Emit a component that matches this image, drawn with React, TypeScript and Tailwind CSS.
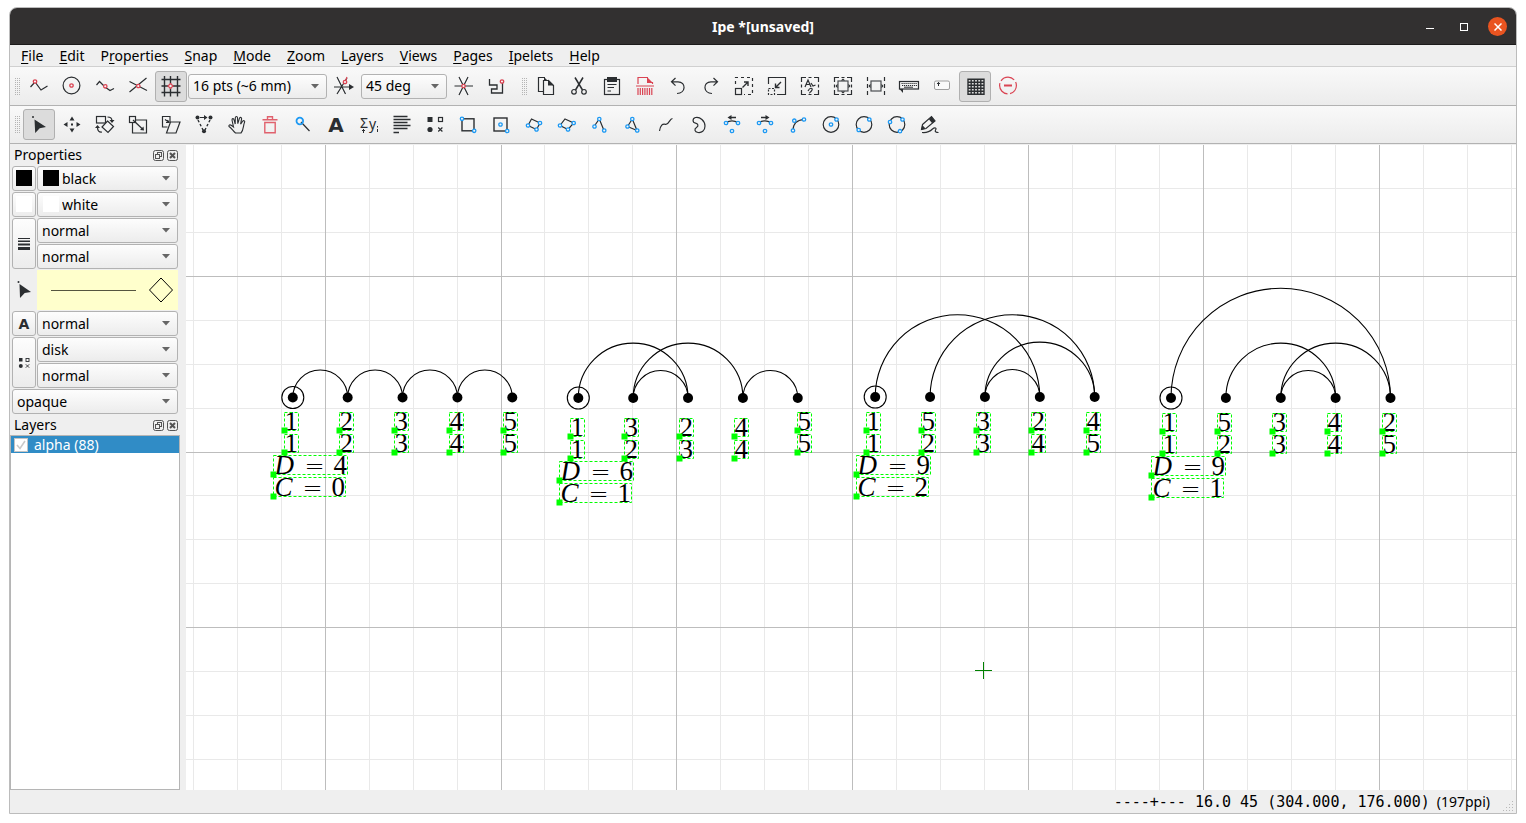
import type { ReactNode } from "react";

const INK = "#2b2e31";
const RED = "#da4453";
const BLUE = "#1d99f3";

function Glyph({ children }: { children: ReactNode }) {
  return (
    <svg width="30" height="30" viewBox="-15 -15 30 30" fill="none" stroke={INK} strokeWidth="1.2" aria-hidden="true">
      {children}
    </svg>
  );
}

function Ring({ x, y, c = BLUE, r = 1.7 }: { x: number; y: number; c?: string; r?: number }) {
  return <circle cx={x} cy={y} r={r} stroke={c} strokeWidth="1.3" fill="#f6f6f6" />;
}

type Tool = { name: string; icon: ReactNode; active?: boolean };

const snapTools: Tool[] = [
  { name: "Snap to vertex", icon: <><path d="M-8.5 1 L-4 -4 L2 4 L8.5 0" /><Ring x={-4} y={-4.5} c={RED} /></> },
  { name: "Snap to control point", icon: <><circle cx="-.5" cy="-.5" r="8.4" /><Ring x={-0.5} y={-0.5} c={RED} /></> },
  { name: "Snap to boundary", icon: <><path d="M-8.5 -1 L-5.5 -4.5 L0 1 L5 4.5 L9 2.5" /><Ring x={0.3} y={0.3} c={RED} /></> },
  { name: "Snap to intersection", icon: <><path d="M-8.5 -4.5 L9 4.5 M8.5 -8 L-8.5 6" /><Ring x={0.3} y={0} c={RED} /></> },
  {
    name: "Snap to grid",
    active: true,
    icon: <><path strokeWidth="1.4" d="M-6.5 -10 V10.5 M-.5 -10 V10.5 M6.5 -10 V10.5 M-9.5 -6.5 H9.5 M-9.5 0 H9.5 M-9.5 6.5 H9.5" /><path d="M-.5 -2.5 L2 0 L-.5 2.5 L-3 0Z" stroke={RED} fill="#eee" /></>,
  },
];

const angleTool: Tool = {
  name: "Angular snap",
  icon: <><path d="M-7 -9 L1.5 8 M3 -8 L-7 8 M-10 1 H7" /><path d="M5 -2 L10 1 L5 4Z" fill={INK} stroke="none" /><path d="M1 -4 L3 -9" stroke={RED} /><Ring x={1} y={-4} c={RED} /></>,
};

const snapTail: Tool[] = [
  { name: "Custom grid snap", icon: <><path d="M-9.5 0 H9 M-5 -9 L4 9 M4 -9 L-5 9" /><Ring x={-0.5} y={0} c={RED} /></> },
  { name: "Automatic snap", icon: <><path d="M-7.5 -7 V-1 H0 V3 H-5.5 V7 H5.5 V-3" strokeWidth="1.3" /><Ring x={5} y={-4.5} c={RED} /></> },
];

const editTools: Tool[] = [
  {
    name: "Copy",
    icon: <><path d="M-3 5.5 H-7.5 V-8.5 H-1" /><path d="M-2.5 -5.5 H2.5 L7.5 -.5 V8.5 H-2.5Z" /><path d="M2 -6.5 L8 -.5 H2Z" fill={INK} stroke="none" /><path d="M-2 -9 L1 -6 H-2Z" fill={INK} stroke="none" /></>,
  },
  { name: "Cut", icon: <><path strokeWidth="1.5" d="M-4 -8.5 L3.5 4 M4 -8.5 L-3.5 4" /><circle cx="-5" cy="5.8" r="2.3" /><circle cx="5" cy="5.8" r="2.3" /></> },
  {
    name: "Paste",
    icon: <><rect x="-7.5" y="-6.5" width="15" height="15" /><path d="M-5 -9 H5 V-4 H-5Z" fill={INK} stroke="none" /><path d="M-4.5 -1.5 H4.5 M-4.5 1.5 H2 M-4.5 5 H-1" strokeWidth="1" /></>,
  },
  {
    name: "Delete",
    icon: <g stroke={RED}><path d="M-7 -2 V-8.5 H3 M7.5 -4 V-2" /><path d="M2 -9 L8 -3 H2Z" fill={RED} stroke="none" /><path d="M-9 0 H9" /><path d="M-7 2 V9 M-4.7 2 V9 M-2.4 2 V9 M-.1 2 V9 M2.2 2 V9 M4.5 2 V9 M6.8 2 V9" /></g>,
  },
  { name: "Undo", icon: <path d="M-2.5 -8 L-6.5 -4.2 L-2.5 -.4 M-6.5 -4.2 H0 C8.5 -4.2 8 7.5 -1 7.5" /> },
  { name: "Redo", icon: <path d="M2.5 -8 L6.5 -4.2 L2.5 -.4 M6.5 -4.2 H0 C-8.5 -4.2 -8 7.5 1 7.5" /> },
  {
    name: "Zoom in",
    icon: <><path d="M-8.5 -2 V-8.5 H8.5 V8.5 H0" strokeDasharray="3 3" /><rect x="-8.5" y="2.5" width="6" height="6" /><path d="M-1.5 1.5 L4 -4 M0 -4 H4 V0" strokeWidth="1.4" /></>,
  },
  {
    name: "Zoom out",
    icon: <><path d="M-8.5 -2 V-8.5 H8.5 V8.5 H0" /><rect x="-8.5" y="2.5" width="6" height="6" strokeDasharray="2 1.5" /><path d="M4 -4 L-1.5 1.5 M-1.5 -2.5 V1.5 H2.5" strokeWidth="1.4" /></>,
  },
  {
    name: "Fit objects",
    icon: <><path d="M-8.5 -4 V-8.5 H-4 M-1.5 -8.5 H1.5 M4 -8.5 H8.5 V-4 M8.5 -1.5 V1.5 M8.5 4 V8.5 H4 M1.5 8.5 H-1.5 M-4 8.5 H-8.5 V4 M-8.5 1.5 V-1.5" /><path d="M-5 1 L-2 -6 L1 1 M-4 -1.5 H0 M1 -3 L3 0 L5.5 -1 M-2 5 C0 1 3 2 2 4 S-1 7 0 7" /></>,
  },
  {
    name: "Fit page",
    icon: <><path d="M-8.5 -4 V-8.5 H-4 M-1.5 -8.5 H1.5 M4 -8.5 H8.5 V-4 M8.5 -1.5 V1.5 M8.5 4 V8.5 H4 M1.5 8.5 H-1.5 M-4 8.5 H-8.5 V4 M-8.5 1.5 V-1.5" /><rect x="-5" y="-5" width="10" height="10" stroke="#4a4d50" /><path d="M-2.2 -5.5 H2.2 L0 -7.5Z M-2.2 5.5 H2.2 L0 7.5Z M-5.5 -2.2 V2.2 L-7.5 0Z M5.5 -2.2 V2.2 L7.5 0Z" fill={INK} stroke="none" /></>,
  },
  {
    name: "Fit width",
    icon: <><path d="M-8.5 -9 V-5 M-8.5 -2 V2 M-8.5 5 V9 M8.5 -9 V-5 M8.5 -2 V2 M8.5 5 V9" /><rect x="-5" y="-5" width="10" height="10" stroke="#4a4d50" /><path d="M-5.5 -2.2 V2.2 L-7.5 0Z M5.5 -2.2 V2.2 L7.5 0Z" fill={INK} stroke="none" /></>,
  },
  {
    name: "Keyboard",
    icon: <><rect x="-9.5" y="-4.5" width="19" height="7.5" /><path d="M-7.5 -2.5 H8 M-7 -.5 H8" strokeDasharray="1.2 .8" strokeWidth="1.2" /><path d="M-5 1.2 H4" strokeWidth="1" /><path d="M-9.5 3 H-6 V7Z" fill={INK} stroke="none" /></>,
  },
  {
    name: "Text size",
    icon: <><rect x="-7.5" y="-5" width="15" height="8.5" rx="1.5" stroke="#a0a0a0" strokeWidth="1" fill="#fafafa" /><path d="M-3.5 0 V-3.5 M-5 -2 L-3.5 -3.6 L-2 -2" strokeWidth="1" /></>,
  },
  {
    name: "Grid visible",
    active: true,
    icon: <path strokeWidth="1.4" d="M-7 -7.5 V9 M-3.8 -7.5 V9 M-.6 -7.5 V9 M2.6 -7.5 V9 M5.8 -7.5 V9 M9 -7.5 V9 M-7.7 -6.8 H9.7 M-7.7 -3.8 H9.7 M-7.7 -.8 H9.7 M-7.7 2.2 H9.7 M-7.7 5.2 H9.7 M-7.7 8.3 H9.7" />,
  },
  {
    name: "Stop",
    icon: <g stroke={RED}><circle cx="0" cy="-.5" r="8.4" strokeDasharray="15 2.6" strokeDashoffset="4" /><path d="M-4 -.5 H4" strokeWidth="2.2" /></g>,
  },
];

const modeTools: Tool[] = [
  { name: "Select", active: true, icon: <g fill={INK} stroke="none"><circle cx="-6" cy="-8" r="1" /><path d="M-4.5 -5.5 L7 2 L.7 3.2 L-3.8 8Z" /></g> },
  {
    name: "Translate",
    icon: <g fill={INK} stroke="none"><path d="M0 -8.5 L2.5 -4.5 H-2.5Z M0 7.5 L2.5 3.5 H-2.5Z M-8.5 -.5 L-4.5 -3 V2Z M8.5 -.5 L4.5 -3 V2Z" /><path d="M-1 -1.5 H1 V.5 H-1Z" /></g>,
  },
  {
    name: "Rotate",
    icon: <><rect x="-8.5" y="-8.5" width="9" height="6.5" /><path d="M2.5 -4 L8.5 1.5 L3 7.5 L-3 2Z" fill="#f4f4f4" /><path d="M2.5 -8 C5.5 -8 7 -6.5 7 -4 M-3 7 C-6 7.5 -7.5 5.5 -7.5 2.5" /><path d="M4.5 -5 H9.5 L7 -2Z M-10 3 H-5 L-7.5 0Z" fill={INK} stroke="none" /></>,
  },
  { name: "Stretch", icon: <><rect x="-8.5" y="-8.5" width="6" height="6" /><path d="M-2 -5 H8.5 V8 H-5.5 V-2" /><path d="M-5 -5 L4.5 4" /><path d="M6 5.5 L5.5 1.5 L2 5Z" fill={INK} stroke="none" /></> },
  { name: "Shear", icon: <><path d="M-3.5 2 H-8.5 V-8.5 H-1 V-3" /><path d="M-.5 -3 H9 L5 8 H-4.5Z" /><path d="M-6 -5.5 L-2.5 -3 M-3.5 -5 L-2 -2.5 L-5 -2.5" /></> },
  {
    name: "Edit path",
    icon: <><path d="M-6 -5 L-1 5 M6 -5 L1 5" strokeDasharray="2.5 2" strokeWidth="1.4" /><path d="M-4 -7.5 H3" /><path d="M0 -10 L3.5 -7.5 L0 -5Z" fill={INK} stroke="none" /><g fill={INK} stroke="none"><circle cx="-6.5" cy="-7.5" r="2" /><circle cx="6.5" cy="-7.5" r="2" /><circle cx="0" cy="6.2" r="2" /></g></>,
  },
  {
    name: "Pan",
    icon: <path strokeWidth="1.1" d="M-1.5 8 C-4 6 -5.5 3 -8 1.5 C-8.6 0 -7 -.6 -5.8 .2 L-3.5 2 L-5 -5 C-5 -6.7 -3.3 -6.8 -3 -5.3 L-1.8 -1 L-1.7 -7.3 C-1.5 -9 .4 -9 .5 -7.3 L.8 -1.3 L2.5 -6.8 C3.2 -8.2 4.9 -7.7 4.6 -6.2 L3.6 -.8 L5.8 -4 C7 -5 8.2 -4 7.5 -2.6 C6 1 6.8 5 4 8 Z" />,
  },
  { name: "Erase", icon: <g stroke="#e0616d"><path d="M-7.5 -5.2 H7.5" strokeWidth="1.5" /><path d="M-2.5 -5.5 V-8.3 H2.5 V-5.5 M-5.2 -2.5 V7.7 H5.2 V-2.5Z" strokeWidth="1.4" /></g> },
  { name: "Magnify", icon: <><path d="M-2 -3 L6.5 6" /><circle cx="-3.2" cy="-4" r="3.3" stroke={BLUE} strokeWidth="1.8" /></> },
  { name: "Label", icon: <text textAnchor="middle" x="0" y="7" fill={INK} stroke="none" fontSize="20" fontWeight="700" fontFamily="DejaVu Sans, sans-serif">A</text> },
  {
    name: "Math label",
    icon: <g fill={INK} stroke="none" fontFamily="Noto Sans, sans-serif"><text x="-9" y="3" fontSize="14">Σ</text><text x="0" y="4" fontSize="14">y</text><path d="M8.5 1 V2.5 M8.5 4 V7 M-5.5 4 V8 M-7 5.5 H-4" stroke={INK} strokeWidth="1" /></g>,
  },
  { name: "Paragraph", icon: <path d="M-8.5 -8.5 H5.5 M-8.5 -5.5 H8.5 M-8.5 -2.5 H5.5 M-8.5 .5 H8.5 M-8.5 3.5 H5.5 M-8.5 7.5 H-3" strokeWidth="1.3" /> },
  {
    name: "Marks",
    icon: <><path d="M-7.5 -8 H-2.5 V-3 H-7.5Z" fill={INK} stroke="none" /><rect x="3.5" y="-7.5" width="4" height="4" /><circle cx="-5" cy="4.5" r="2.6" fill={INK} stroke="none" /><path d="M3.2 2.5 L7.4 6.5 M7.4 2.5 L3.2 6.5" /></>,
  },
  { name: "Rectangle", icon: <><rect x="-6" y="-6.2" width="12" height="12" strokeWidth="1.4" /><Ring x={-6} y={-6.2} /><Ring x={6.2} y={5.8} /></> },
  { name: "Centered rectangle", icon: <><rect x="-7" y="-7" width="13" height="13" strokeWidth="1.4" /><Ring x={-0.5} y={-0.5} /><Ring x={6.2} y={6} /></> },
  { name: "Rotated rectangle", icon: <><path d="M-2.5 -6 L6 -2 L2.5 4.5 L-6 .5Z" /><Ring x={-6} y={0.5} /><Ring x={6} y={-2} /><Ring x={2.5} y={4.5} /></> },
  { name: "Parallelogram", icon: <><path d="M-2 -6 L6.7 -2 L1 4.5 L-7 .5Z" /><Ring x={-7} y={0.5} /><Ring x={6.7} y={-2} /><Ring x={1} y={4.5} /></> },
  { name: "Polyline", icon: <><path d="M-6 1.5 L-.7 -6 L4 5.5" /><Ring x={-5.5} y={1.5} /><Ring x={-0.7} y={-6} /><Ring x={4.2} y={5.5} /></> },
  { name: "Polygon", icon: <><path d="M-5.5 1.5 L-.7 -6 L4 5.5Z" /><Ring x={-5.5} y={1.5} /><Ring x={-0.7} y={-6} /><Ring x={4.2} y={5.5} /></> },
  { name: "Spline", icon: <path d="M-6.5 6 C-5.5 0 -3.5 -1.5 -.5 -.7 C3 0 3.5 -6.5 6.5 -6.5" /> },
  { name: "Closed spline", icon: <path d="M-3.5 -7.5 C1 -8.5 6 -4 6 1 C6 6 2.5 8 -1 7.5 C-4.5 7 -5 4 -2.5 2.5 C0 1 -1 -1.5 -3.5 -1.8 C-6.5 -2.2 -7 -6.5 -3.5 -7.5Z" /> },
  {
    name: "Arc left",
    icon: <><path d="M-6 -2.5 C-2.5 -4.5 2.5 -4.5 6 -2.5" /><path d="M-1 -7.5 H4" strokeWidth="1.4" /><path d="M-4.5 -7.5 L-.5 -10 V-5Z" fill={INK} stroke="none" /><Ring x={-6} y={-2} /><Ring x={6} y={-2} /><Ring x={0} y={6} /></>,
  },
  {
    name: "Arc right",
    icon: <><path d="M-6 -2.5 C-2.5 -4.5 2.5 -4.5 6 -2.5" /><path d="M1 -7.5 H-4" strokeWidth="1.4" /><path d="M4.5 -7.5 L.5 -10 V-5Z" fill={INK} stroke="none" /><Ring x={-6} y={-2} /><Ring x={6} y={-2} /><Ring x={0} y={6} /></>,
  },
  { name: "Arc through points", icon: <><path d="M-5 5.5 C-5 -2 -1 -5 6 -5.5" /><Ring x={-5} y={5.5} /><Ring x={-3.7} y={-4.3} /><Ring x={6} y={-5.5} /></> },
  { name: "Circle", icon: <><circle cx="0" cy="-.5" r="7.8" /><Ring x={0} y={-0.5} /><Ring x={5.5} y={-5.5} /></> },
  { name: "Circle by diameter", icon: <><circle cx="0" cy="-.5" r="7.8" /><Ring x={-5.3} y={5} /><Ring x={5.3} y={-5.5} /></> },
  { name: "Circle by points", icon: <><circle cx="0" cy="-.5" r="7.8" /><Ring x={-7} y={-3} /><Ring x={5.5} y={-5.5} /><Ring x={3} y={6.2} /></> },
  {
    name: "Ink",
    icon: <><path d="M-7.5 -.5 L1.5 -8.5 L5 -4 L-4 3.5 L-8.5 4.5Z" /><path d="M-1 -5.5 L2.2 -1.8 L5 -4 L1.5 -8.5Z M-8.8 5 L-7.8 0 L-4.5 3.5Z" fill={INK} stroke="none" /><path d="M-8 7.5 C-3 8 0 6.5 2.5 4 C5 2 7 3 5.5 5 C4.5 7 6.5 7.5 8.5 7.5" /></>,
  },
];

function ToolButton({ tool }: { tool: Tool }) {
  return (
    <button
      type="button"
      aria-label={tool.name}
      className={
        "flex h-[31px] w-8 shrink-0 items-center justify-center rounded-[3px] border " +
        (tool.active ? "border-[#b0b0b0] bg-[#dcdcdc]" : "border-transparent")
      }
    >
      <Glyph>{tool.icon}</Glyph>
    </button>
  );
}

function Handle() {
  return (
    <svg width="5" height="17" viewBox="0 0 5 17" className="shrink-0" fill="#b4b4b4" aria-hidden="true">
      {[0, 2, 4, 6, 8, 10, 12, 14, 16].map((y) =>
        [0, 2, 4].map((x) => <rect key={x + "-" + y} x={x} y={y} width="1" height="1" />),
      )}
    </svg>
  );
}

function Combo({ label, value, swatch, className = "" }: { label: string; value: string; swatch?: string; className?: string }) {
  return (
    <div className={"relative h-[25px] " + className}>
      <select
        aria-label={label}
        defaultValue={value}
        className={
          "h-full w-full appearance-none rounded-[3px] border border-[#b2b2b2] bg-linear-to-b from-[#fdfdfd] to-[#ececec] text-black outline-none " +
          (swatch ? "pl-6" : "pl-1")
        }
      >
        <option>{value}</option>
      </select>
      {swatch && <span className={"pointer-events-none absolute top-1 left-[6px] size-4 " + swatch} />}
      <svg width="8" height="5" viewBox="0 0 8 5" className="pointer-events-none absolute top-[10px] right-2" aria-hidden="true">
        <path d="M0 0 H8 L4 4.5Z" fill="#666" />
      </svg>
    </div>
  );
}

function SideButton({ label, className = "", children }: { label: string; className?: string; children: ReactNode }) {
  return (
    <button
      type="button"
      aria-label={label}
      className={"flex items-center justify-center rounded-[3px] border border-[#b2b2b2] bg-linear-to-b from-[#fdfdfd] to-[#ececec] " + className}
    >
      {children}
    </button>
  );
}

function DockTitle({ title }: { title: string }) {
  return (
    <div className="flex h-5 shrink-0 items-center justify-between pl-[2px]">
      <h2>{title}</h2>
      <span className="flex items-center gap-[3px]">
        <button type="button" aria-label={"Float " + title}>
          <svg width="11" height="11" viewBox="0 0 11 11" fill="none" stroke="#555" className="block" aria-hidden="true">
            <rect x=".5" y=".5" width="10" height="10" rx="2" />
            <rect x="4.5" y="2.5" width="4" height="4" />
            <rect x="2.5" y="4.5" width="4" height="4" fill="#eee" />
          </svg>
        </button>
        <button type="button" aria-label={"Close " + title}>
          <svg width="11" height="11" viewBox="0 0 11 11" fill="none" stroke="#555" className="block" aria-hidden="true">
            <rect x=".5" y=".5" width="10" height="10" rx="2" />
            <path d="M3 3 L8 8 M8 3 L3 8" strokeWidth="2" />
          </svg>
        </button>
      </span>
    </div>
  );
}

const menus: [string, string, string][] = [
  ["", "F", "ile"],
  ["", "E", "dit"],
  ["P", "r", "operties"],
  ["", "S", "nap"],
  ["", "M", "ode"],
  ["", "Z", "oom"],
  ["", "L", "ayers"],
  ["", "V", "iews"],
  ["", "P", "ages"],
  ["", "I", "pelets"],
  ["", "H", "elp"],
];

type Figure = {
  x: number;
  y: number;
  arcs: [number, number][];
  order: string;
  base: number;
  lastBase: number;
  formulaX: number;
  d: string;
  c: string;
};

const STEP = 54.87;
const SORTED = "12345";

const figures: Figure[] = [
  { x: 292.8, y: 397.5, arcs: [[0, 1], [1, 2], [2, 3], [3, 4]], order: "12345", base: 430.5, lastBase: 430.5, formulaX: 273.5, d: "4", c: "0" },
  { x: 578.3, y: 398, arcs: [[0, 2], [1, 2], [1, 3], [3, 4]], order: "13245", base: 436.5, lastBase: 430.5, formulaX: 559.5, d: "6", c: "1" },
  { x: 875.2, y: 397, arcs: [[0, 3], [1, 4], [2, 3], [2, 4]], order: "15324", base: 430.5, lastBase: 430.5, formulaX: 856.5, d: "9", c: "2" },
  { x: 1171, y: 398, arcs: [[0, 4], [1, 3], [2, 3], [2, 4]], order: "15342", base: 431.5, lastBase: 431.5, formulaX: 1151.5, d: "9", c: "1" },
];

function Selection({ x, base, w, h }: { x: number; base: number; w: number; h: number }) {
  return (
    <g>
      <rect x={x} y={base - h} width={w} height={h} fill="none" stroke="#00ff00" strokeDasharray="3 2" />
      <rect x={x - 3} y={base - 3} width="6" height="6" fill="#00ff00" />
    </g>
  );
}

function FigureView({ figure }: { figure: Figure }) {
  const at = (i: number) => figure.x + i * STEP;
  const formulas = [
    { letter: "D", digit: figure.d, eq: 31, num: 60, w: 74, base: figure.base + 44 },
    { letter: "C", digit: figure.c, eq: 29, num: 58, w: 72, base: figure.base + 66 },
  ];
  return (
    <g>
      {figure.arcs.map(([a, b]) => {
        const r = ((b - a) * STEP) / 2;
        return <path key={a + "-" + b} d={`M${at(a)} ${figure.y} A${r} ${r} 0 0 1 ${at(b)} ${figure.y}`} fill="none" stroke="#000" strokeWidth="1.1" />;
      })}
      <circle cx={figure.x} cy={figure.y} r="11" fill="none" stroke="#000" strokeWidth="1.1" />
      {[0, 1, 2, 3, 4].map((i) => (
        <circle key={i} cx={at(i)} cy={figure.y} r="5" />
      ))}
      {[figure.order, SORTED].map((row, r) =>
        row.split("").map((digit, i) => {
          const shifted = i === 4 && figure.lastBase !== figure.base;
          const base = (shifted ? figure.lastBase : figure.base) + r * 22;
          const x = Math.round(at(i) - 8.8) + 0.5 + (shifted ? 8 : 0);
          return (
            <g key={r + "-" + i}>
              <text x={x} y={base - 0.5}>{digit}</text>
              <Selection x={x} base={base} w={14} h={18} />
            </g>
          );
        }),
      )}
      {formulas.map((f) => (
        <g key={f.letter}>
          <text y={f.base - 0.5}>
            <tspan x={figure.formulaX + 1} fontStyle="italic">{f.letter}</tspan>
            <tspan x={figure.formulaX + f.eq} fontSize="24" fontWeight="200" fontFamily="DejaVu Sans Light, DejaVu Sans, sans-serif">=</tspan>
            <tspan x={figure.formulaX + f.num}>{f.digit}</tspan>
          </text>
          <Selection x={figure.formulaX} base={f.base} w={f.w} h={19} />
        </g>
      ))}
    </g>
  );
}

function Drawing() {
  const grid = 43.925;
  const columns = Array.from({ length: 60 }, (_, i) => i - 3);
  const rows = Array.from({ length: 40 }, (_, i) => i - 2);
  const vx = (i: number) => Math.floor(325.3 + i * grid) + 0.5;
  const hy = (i: number) => Math.floor(276.3 + i * grid) + 0.5;
  const minor = "#e9e9e9";
  const major = "#bdbdbd";
  return (
    <svg className="absolute inset-0 h-full w-full" aria-label="Drawing canvas">
      <g transform="translate(-186 -145)" fontFamily="Liberation Serif, serif" fontSize="27">
        {columns.filter((i) => i % 4 !== 0).map((i) => <path key={"v" + i} d={`M${vx(i)} 0 V2400`} stroke={minor} />)}
        {rows.filter((i) => i % 4 !== 0).map((i) => <path key={"h" + i} d={`M0 ${hy(i)} H3200`} stroke={minor} />)}
        {columns.filter((i) => i % 4 === 0).map((i) => <path key={"v" + i} d={`M${vx(i)} 0 V2400`} stroke={major} />)}
        {rows.filter((i) => i % 4 === 0).map((i) => <path key={"h" + i} d={`M0 ${hy(i)} H3200`} stroke={major} />)}
        {figures.map((f) => <FigureView key={f.x} figure={f} />)}
        <path d="M975 670.5 H992 M983.5 662 V679" stroke="#008000" />
      </g>
    </svg>
  );
}

export default function App() {
  return (
    <div className="flex h-screen flex-col bg-white px-[9px] pt-[7px] pb-[9px] font-['Noto_Sans',sans-serif] text-[14px] leading-5 text-black">
      <div className="flex min-h-0 flex-1 flex-col overflow-hidden rounded-t-lg border border-[#bcbcbc] bg-[#efefef]">
        <header className="grid h-[37px] shrink-0 grid-cols-[1fr_auto_1fr] items-center border-b border-[#1c1b1b] bg-[#323030] pt-px text-white">
          <span />
          <h1 className="font-bold">Ipe *[unsaved]</h1>
          <div className="flex items-center justify-end gap-[14px] pr-[9px]">
            <button type="button" aria-label="Minimize" className="flex size-5 items-center justify-center">
              <svg width="8" height="8" viewBox="0 0 8 8" aria-hidden="true"><path d="M0 5.5 H8" stroke="#fff" /></svg>
            </button>
            <button type="button" aria-label="Maximize" className="flex size-5 items-center justify-center">
              <svg width="8" height="8" viewBox="0 0 8 8" aria-hidden="true"><rect x=".5" y=".5" width="7" height="7" stroke="#fff" fill="none" /></svg>
            </button>
            <button type="button" aria-label="Close" className="flex size-[19px] items-center justify-center rounded-full bg-[#e95420]">
              <svg width="8" height="8" viewBox="0 0 8 8" aria-hidden="true"><path d="M.5 .5 L7.5 7.5 M7.5 .5 L.5 7.5" stroke="#fff" strokeWidth="1.5" /></svg>
            </button>
          </div>
        </header>

        <nav className="flex h-[22px] shrink-0 items-center gap-4 border-b border-[#d0d0d0] pl-[11px]">
          {menus.map(([before, key, after]) => (
            <button type="button" key={before + key + after}>
              {before}
              <span className="underline decoration-1 underline-offset-2">{key}</span>
              {after}
            </button>
          ))}
        </nav>

        <div className="flex h-[39px] shrink-0 items-center gap-px border-b border-[#b2b2b2] bg-linear-to-b from-[#f9f9f9] to-[#ececec] pl-[5px]">
          <Handle />
          <span className="w-px" />
          {snapTools.map((t) => <ToolButton key={t.name} tool={t} />)}
          <Combo label="Grid size" value="16 pts (~6 mm)" className="w-[139px]" />
          <ToolButton tool={angleTool} />
          <Combo label="Angle" value="45 deg" className="w-[86px]" />
          {snapTail.map((t) => <ToolButton key={t.name} tool={t} />)}
          <span className="flex w-[15px] justify-end pr-[2px]"><Handle /></span>
          {editTools.map((t) => <ToolButton key={t.name} tool={t} />)}
        </div>

        <div className="flex h-[38px] shrink-0 items-center gap-px border-b border-[#b2b2b2] bg-linear-to-b from-[#f9f9f9] to-[#ececec] pl-[5px]">
          <Handle />
          <span className="w-px" />
          {modeTools.map((t) => <ToolButton key={t.name} tool={t} />)}
        </div>

        <div className="flex min-h-0 flex-1 gap-[6px] pt-px">
          <aside className="flex w-[170px] shrink-0 flex-col">
            <section className="flex flex-col px-[2px]">
              <DockTitle title="Properties" />
              <div className="mt-px grid grid-cols-[24px_1fr] gap-px">
                <SideButton label="Stroke color"><span className="mb-px size-4 bg-black" /></SideButton>
                <Combo label="Stroke" value="black" swatch="bg-black" />
                <SideButton label="Fill color"><span className="mb-px size-4 bg-white" /></SideButton>
                <Combo label="Fill" value="white" swatch="bg-white" />
                <SideButton label="Pen width" className="row-span-2">
                  <svg width="12" height="12" viewBox="0 0 12 12" fill={INK} aria-hidden="true">
                    <path d="M0 0 H12 V1 H0Z M0 2.5 H12 V4 H0Z M0 5.5 H12 V7.5 H0Z M0 9 H12 V12 H0Z" />
                  </svg>
                </SideButton>
                <Combo label="Pen" value="normal" />
                <Combo label="Dash style" value="normal" />
                <span className="flex h-10 items-center justify-center">
                  <svg width="14" height="18" viewBox="-7 -9 14 18" fill={INK} aria-hidden="true">
                    <circle cx="-5.5" cy="-8" r="1" />
                    <path d="M-4.5 -6 L7 2 L.7 3 L-4 8Z" />
                  </svg>
                </span>
                <div className="flex h-10 items-center justify-between bg-[#ffffcc] pr-[5px] pl-[14px]">
                  <span className="h-px w-[85px] bg-[#55553f]" />
                  <svg width="24" height="26" viewBox="0 0 24 26" fill="none" stroke="#000" aria-hidden="true">
                    <path d="M12 1 L23.5 13 L12 25 L.5 13Z" />
                  </svg>
                </div>
                <SideButton label="Text size"><span className="font-['DejaVu_Sans',sans-serif] text-[14px] font-bold text-[#2b2e31]">A</span></SideButton>
                <Combo label="Text" value="normal" />
                <SideButton label="Mark" className="row-span-2">
                  <svg width="12" height="12" viewBox="0 0 12 12" fill={INK} aria-hidden="true">
                    <rect x="1" y="1" width="3.5" height="3.5" />
                    <rect x="8" y="1.5" width="3" height="3" fill="none" stroke={INK} strokeWidth=".9" />
                    <circle cx="2.8" cy="9" r="2" />
                    <path d="M7.8 7.3 L11.2 10.7 M11.2 7.3 L7.8 10.7" stroke={INK} strokeWidth=".9" />
                  </svg>
                </SideButton>
                <Combo label="Mark shape" value="disk" />
                <Combo label="Mark size" value="normal" />
                <Combo label="Opacity" value="opaque" className="col-span-2" />
              </div>
            </section>
            <section className="flex min-h-0 flex-1 flex-col">
              <div className="px-[2px] pt-px"><DockTitle title="Layers" /></div>
              <div className="min-h-0 flex-1 border border-[#b5b5b5] bg-white">
                <label className="flex h-[17px] items-center gap-[6px] bg-[#308cc6] pl-[3px] leading-4 text-white">
                  <span className="relative flex size-[14px]">
                    <input type="checkbox" defaultChecked className="size-[14px] appearance-none border border-[#c4c4c4] bg-white" />
                    <svg width="10" height="10" viewBox="0 0 10 10" className="pointer-events-none absolute top-[2px] left-[2px]" aria-hidden="true">
                      <path d="M1 5 L4 8.5 L9 1" fill="none" stroke="#c9c9c9" strokeWidth="1.6" />
                    </svg>
                  </span>
                  alpha (88)
                </label>
              </div>
            </section>
          </aside>
          <main className="relative min-w-0 flex-1 overflow-hidden bg-white">
            <Drawing />
          </main>
        </div>

        <footer className="flex h-[23px] shrink-0 items-center justify-end">
          <span className="font-['DejaVu_Sans_Mono',monospace] text-[15px] whitespace-pre">----+--- 16.0 45 (304.000, 176.000)</span>
          <span className="ml-[7px] pt-px">(197ppi)</span>
          <svg width="12" height="12" viewBox="0 0 12 12" className="mr-px ml-[13px] self-end" fill="#b8b8b8" aria-hidden="true">
            <path d="M9 0h1v1h-1z M6 3h1v1h-1z M9 3h1v1h-1z M3 6h1v1h-1z M6 6h1v1h-1z M9 6h1v1h-1z M0 9h1v1h-1z M3 9h1v1h-1z M6 9h1v1h-1z M9 9h1v1h-1z" />
          </svg>
        </footer>
      </div>
    </div>
  );
}
